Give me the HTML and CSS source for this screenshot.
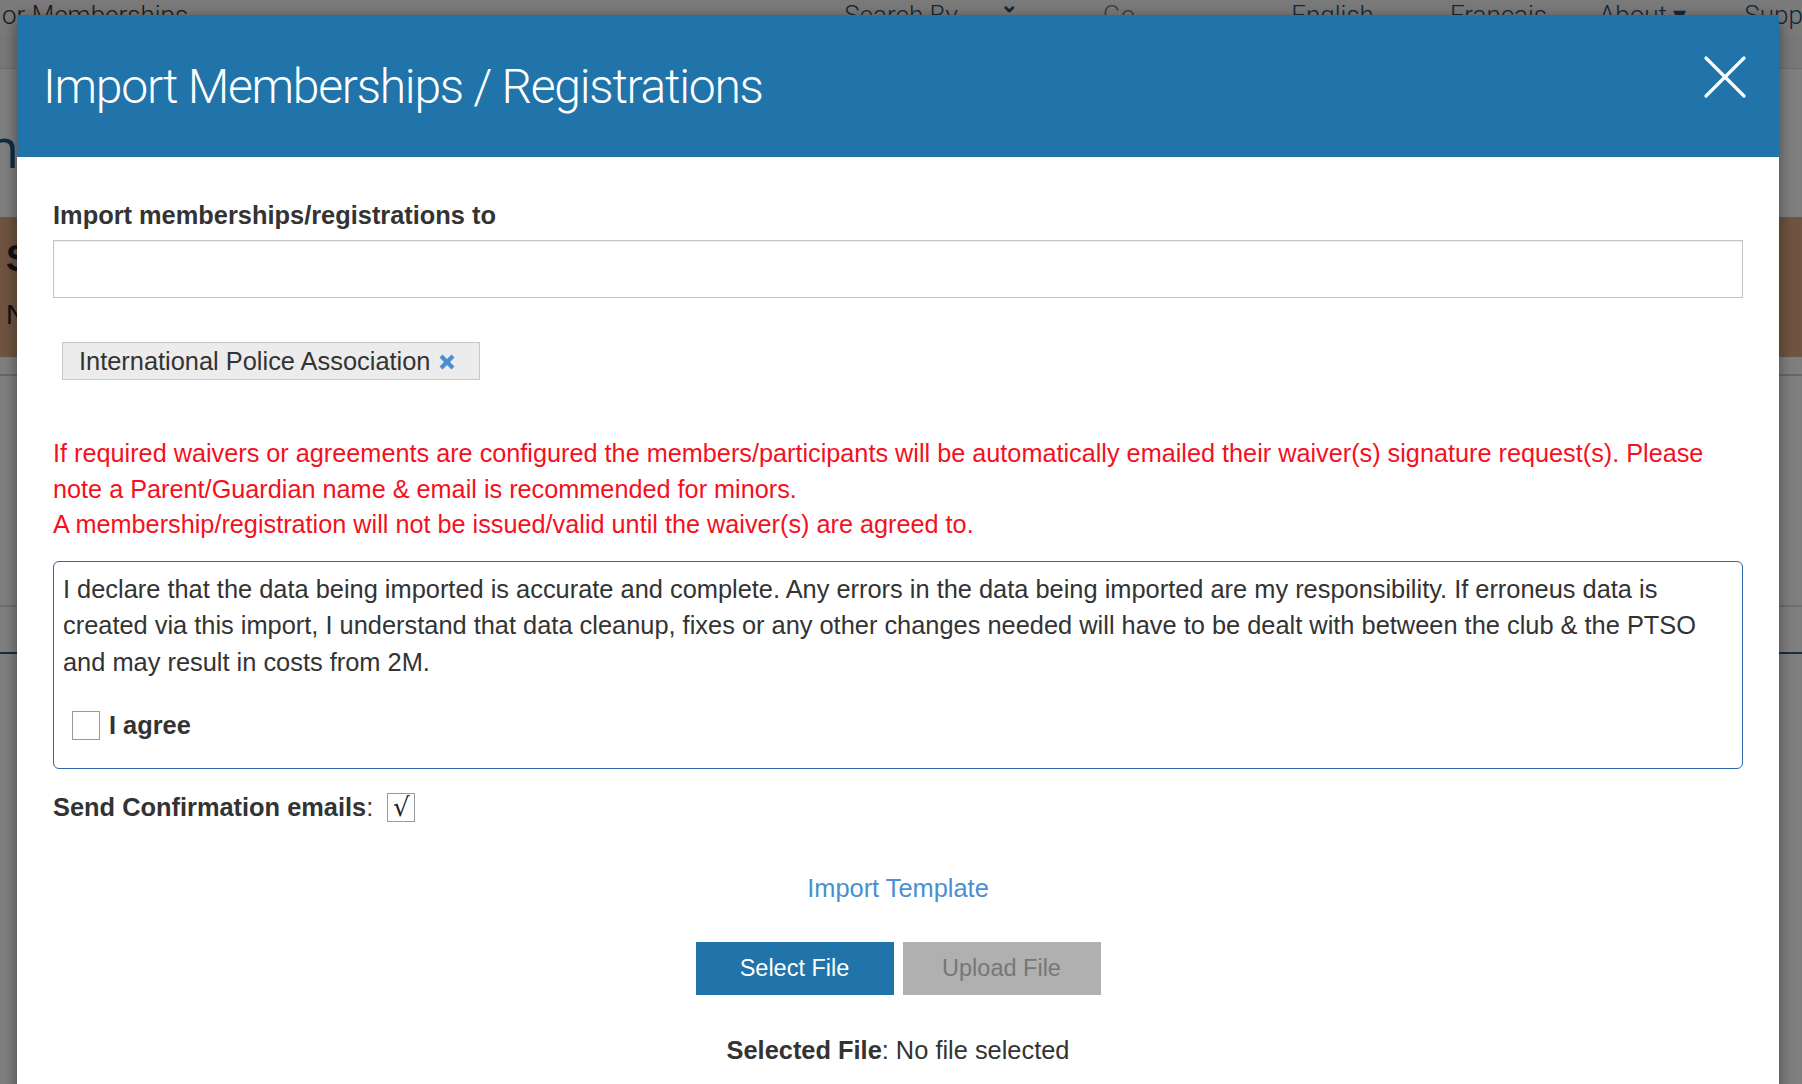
FILE: index.html
```html
<!DOCTYPE html>
<html lang="en">
<head>
<meta charset="utf-8">
<title>Import Memberships / Registrations</title>
<link rel="stylesheet" href="styles.css">
</head>
<body>
<div class="page">
  <div class="topnav">
    <span class="nav-item nav-first">or Memberships</span>
    <span class="nav-sep sep-a"></span>
    <span class="nav-item nav-search">Search By</span>
    <span class="nav-chev">&#x2304;</span>
    <span class="nav-sep sep-b"></span>
    <span class="nav-item nav-go">Go</span>
    <span class="nav-sep sep-c"></span>
    <span class="nav-pin"></span>
    <span class="nav-sep sep-d"></span>
    <span class="nav-item nav-en">English</span>
    <span class="nav-sep sep-e"></span>
    <span class="nav-item nav-fr">Fran&ccedil;ais</span>
    <span class="nav-item nav-about">About &#x25BE;</span>
    <span class="nav-item nav-supp">Support</span>
  </div>
  <div class="subnav"></div>
  <div class="hero"><span class="hero-letter">n</span></div>
  <div class="band">
    <span class="band-s">S</span>
    <span class="band-n">N</span>
  </div>
  <div class="below"></div>
  <div class="below2"></div>
  <div class="below3"></div>
</div>
<div class="overlay"></div>

<div class="modal">
  <div class="modal-header">
    <h1 class="modal-title">Import Memberships / Registrations</h1>
    <svg class="modal-close" width="44" height="44" viewBox="0 0 44 44" aria-label="Close">
      <line x1="3" y1="3" x2="41" y2="41" stroke="#fff" stroke-width="3.2" stroke-linecap="round"/>
      <line x1="41" y1="3" x2="3" y2="41" stroke="#fff" stroke-width="3.2" stroke-linecap="round"/>
    </svg>
  </div>
  <div class="modal-body">
    <div class="field-label">Import memberships/registrations to</div>
    <div class="text-input"></div>
    <div class="tag-row">
      <span class="tag">International Police Association
        <svg class="tag-x" width="18" height="18" viewBox="0 0 18 18">
          <path d="M1.5 4.5 L4.5 1.5 L9 6 L13.5 1.5 L16.5 4.5 L12 9 L16.5 13.5 L13.5 16.5 L9 12 L4.5 16.5 L1.5 13.5 L6 9 Z" fill="#4a8fd1"/>
        </svg>
      </span>
    </div>
    <div class="warning">
      <p>If required waivers or agreements are configured the members/participants will be automatically emailed their waiver(s) signature request(s). Please note a Parent/Guardian name &amp; email is recommended for minors.</p>
      <p>A membership/registration will not be issued/valid until the waiver(s) are agreed to.</p>
    </div>
    <div class="declaration">
      <p class="decl-text">I declare that the data being imported is accurate and complete. Any errors in the data being imported are my responsibility. If erroneus data is created via this import, I understand that data cleanup, fixes or any other changes needed will have to be dealt with between the club &amp; the PTSO and may result in costs from 2M.</p>
      <div class="agree-row">
        <span class="checkbox"></span>
        <span class="agree-label">I agree</span>
      </div>
    </div>
    <div class="confirm-row">
      <span class="confirm-label"><b>Send Confirmation emails</b>:</span>
      <span class="checkbox checked">&#x221A;</span>
    </div>
    <div class="template-row"><a class="template-link">Import Template</a></div>
    <div class="button-row">
      <span class="btn btn-primary">Select File</span>
      <span class="btn btn-disabled">Upload File</span>
    </div>
    <div class="selected-row"><b>Selected File</b>: No file selected</div>
  </div>
</div>
</body>
</html>
```

FILE: styles.css
```css
* { box-sizing: border-box; }
html, body { margin: 0; padding: 0; }
body {
  width: 1802px;
  height: 1084px;
  overflow: hidden;
  background: #ffffff;
  font-family: "Liberation Sans", Arial, sans-serif;
  position: relative;
}

/* ---------- page underneath ---------- */
.page { width: 100%; }
.topnav {
  height: 36px;
  background: #f4f4f4;
  display: flex;
  align-items: flex-start;
  font-family: Roboto, "Liberation Sans", sans-serif;
  font-weight: 300;
  font-size: 26px;
  color: #2a4e72;
  white-space: nowrap;
  overflow: hidden;
}
.nav-item { line-height: 30px; }
.nav-first { margin-left: 2px; color: #3a3a3a; }
.nav-sep { width: 1px; height: 36px; background: #2a4e72; }
.sep-a { margin-left: 551px; }
.nav-search { margin-left: 105px; }
.nav-chev { margin-left: 42px; font-size: 22px; line-height: 10px; font-weight: 700; }
.sep-b { margin-left: 58px; }
.nav-go { margin-left: 27px; color: #777; }
.sep-c { margin-left: 22px; }
.nav-pin { margin-left: 56px; width: 10px; height: 14px; background: #1d3e5e; }
.sep-d { margin-left: 12px; }
.nav-en { margin-left: 66px; }
.sep-e { margin-left: 36px; height: 20px; }
.nav-fr { margin-left: 40px; }
.nav-about { margin-left: 52px; }
.nav-supp { margin-left: 58px; }

.subnav { height: 33px; background: #f0f0f0; border-bottom: 1px solid #d8d8d8; }
.hero { height: 148px; background: #ffffff; }
.hero-letter {
  display: block;
  margin-left: -14px;
  padding-top: 48px;
  font-family: "Open Sans", sans-serif;
  font-size: 54px;
  line-height: 60px;
  color: #1a5a8a;
}
.band {
  height: 140px;
  background: #dea883;
  padding-top: 22px;
}
.band-s { display: block; margin-left: 6px; font-weight: 700; font-size: 36px; line-height: 40px; color: #222; }
.band-n { display: block; margin-left: 6px; margin-top: 20px; font-size: 28px; line-height: 32px; color: #222; }
.below { height: 19px; border-bottom: 2px solid #cfcfcf; }
.below2 { height: 231px; border-bottom: 2px solid #dcdcdc; }
.below3 { height: 47px; border-bottom: 2px solid #3a5a7a; }

.overlay {
  position: absolute;
  inset: 0;
  background: rgba(0, 0, 0, 0.5);
}

/* ---------- modal ---------- */
.modal {
  position: absolute;
  left: 17px;
  top: 15px;
  width: 1762px;
  height: 1100px;
  background: #ffffff;
  box-shadow: 0 4px 14px rgba(0, 0, 0, 0.45);
}
.modal-header {
  height: 142px;
  background: #2074aa;
  display: flex;
  justify-content: space-between;
  align-items: flex-start;
  padding: 0 32px 0 26px;
}
.modal-title {
  margin: 0;
  padding-top: 44px;
  font-family: Roboto, "Open Sans", sans-serif;
  font-weight: 300;
  font-size: 48px;
  line-height: 56px;
  color: #ffffff;
  letter-spacing: -1.25px;
}
.modal-close { margin-top: 40px; }

.modal-body {
  padding: 0 36px;
  color: #333333;
  font-size: 25.4px;
}
.field-label {
  margin-top: 45px;
  font-weight: 700;
  line-height: 26px;
  color: #333;
}
.text-input {
  margin-top: 12px;
  height: 58px;
  border: 1px solid #c4c4c4;
  box-shadow: inset 0 1px 2px rgba(0,0,0,0.08);
  background: #fff;
}
.tag-row { margin-top: 44px; display: flex; }
.tag {
  margin-left: 9px;
  height: 38px;
  width: 418px;
  display: flex;
  align-items: center;
  gap: 8px;
  padding-left: 16px;
  background: #ececec;
  border: 1px solid #c8c8c8;
  color: #333;
  white-space: nowrap;
}
.tag-x { flex: none; margin-top: 1px; }

.warning {
  margin-top: 56px;
  color: #f5101e;
  font-size: 25.25px;
  line-height: 35.6px;
}
.warning p { margin: 0; }

.declaration {
  margin-top: 18px;
  height: 208px;
  border: 1px solid #2b68ab;
  border-radius: 6px;
  padding: 9px 9px 0 9px;
}
.decl-text { margin: 0; line-height: 36.5px; color: #333; }
.agree-row {
  margin-top: 30px;
  display: flex;
  align-items: center;
  gap: 9px;
  padding-left: 9px;
}
.checkbox {
  width: 28px;
  height: 29px;
  border: 1px solid #9a9a9a;
  background: #fff;
  display: inline-flex;
  align-items: center;
  justify-content: center;
}
.agree-label { font-weight: 700; line-height: 30px; }

.confirm-row {
  margin-top: 24px;
  display: flex;
  align-items: center;
  gap: 14px;
  line-height: 28px;
}
.checkbox.checked {
  font-family: "DejaVu Sans", sans-serif;
  font-size: 26px;
  line-height: 28px;
  color: #222;
}

.template-row {
  margin-top: 53px;
  text-align: center;
  line-height: 26px;
}
.template-link { color: #4a8fd1; }

.button-row {
  margin-top: 41px;
  display: flex;
  justify-content: center;
  gap: 9px;
}
.btn {
  width: 198px;
  height: 53px;
  display: flex;
  align-items: center;
  justify-content: center;
  font-size: 23.5px;
}
.btn-primary { background: #2074aa; color: #ffffff; }
.btn-disabled { background: #b0b0b0; color: #777777; }

.selected-row {
  margin-top: 42px;
  text-align: center;
  line-height: 26px;
  color: #333;
}
```
